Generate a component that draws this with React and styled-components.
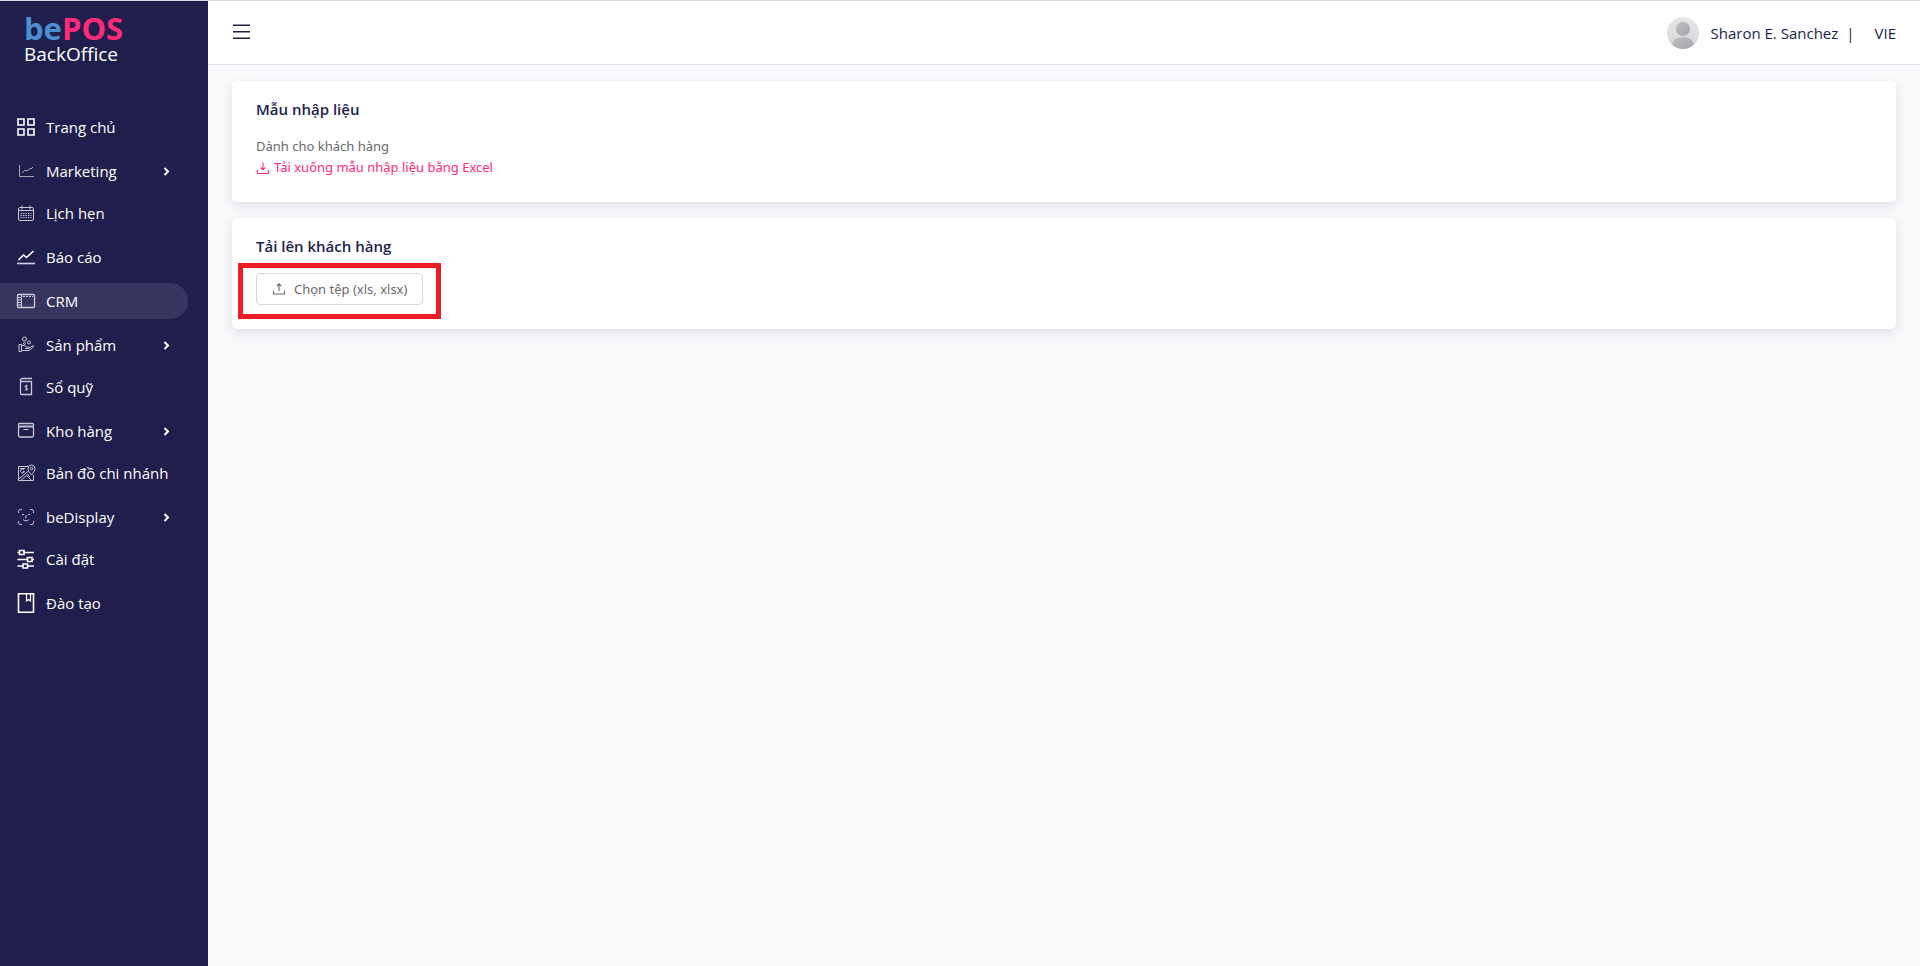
import styled, { createGlobalStyle } from "styled-components";

const Colors = {
  Navy: "#201e4c",
  Pink: "#ff2a78",
  Blue: "#4a8fd3",
  Grey: "#6a6a6a",
  Border: "#d9d9d9",
  Page: "#f8fafc",
  Mark: "#ee1c25",
};

const GlobalStyle = createGlobalStyle`
  * {
    box-sizing: border-box;
  }

  body {
    margin: 0;
    color: ${Colors.Navy};
    background: ${Colors.Page};
    font-family: "Open Sans", "Noto Sans", sans-serif;
    font-size: 15px;
  }

  button {
    font-family: inherit;
    cursor: pointer;
  }
`;

const Layout = styled.div`
  display: flex;
  min-height: 100vh;
  border-top: 1px solid #d8d8de;
`;

const Sidebar = styled.aside`
  flex: 0 0 208px;
  background: ${Colors.Navy};
  color: white;
`;

const Logo = styled.a`
  display: flex;
  flex-direction: column;
  height: 108px;
  padding: 11px 24px;
  color: white;
  text-decoration: none;
`;

const LogoName = styled.span`
  color: ${Colors.Blue};
  font-size: 31px;
  font-weight: bold;
  line-height: 32px;
`;

const LogoAccent = styled.span`
  color: ${Colors.Pink};
`;

const LogoCaption = styled.span`
  font-size: 19px;
  line-height: 20px;
`;

const Menu = styled.ul`
  margin: 0;
  padding: 0;
  list-style: none;
`;

const MenuItem = styled.li`
  margin-bottom: ${({ $group }) => ($group ? 6 : 8)}px;
`;

const MenuLink = styled.a`
  display: flex;
  align-items: center;
  gap: 10px;
  width: 188px;
  height: 36px;
  padding: 0 16px;
  border: none;
  border-radius: 0 18px 18px 0;
  background: ${({ $active }) => ($active ? "#37355f" : "transparent")};
  color: white;
  font-size: 15px;
  font-weight: 500;
  text-align: left;
  text-decoration: none;
`;

const MenuText = styled.span`
  flex: 1;
  white-space: nowrap;
`;

const MenuIcon = styled.svg`
  flex: none;
  width: 20px;
  height: 20px;
  fill: none;
  stroke: currentColor;
  stroke-width: ${({ $bold }) => ($bold ? 1.6 : 1)};
  opacity: ${({ $bold }) => ($bold ? 1 : 0.75)};
`;

const Arrow = styled.svg`
  flex: none;
  width: 12px;
  height: 12px;
  fill: none;
  stroke: currentColor;
  stroke-width: 2;
`;

const Main = styled.div`
  flex: 1;
  min-width: 0;
`;

const Header = styled.header`
  display: flex;
  align-items: center;
  justify-content: space-between;
  height: 64px;
  padding: 0 24px;
  background: white;
  border-bottom: 1px solid #e3e5ea;
`;

const PlainButton = styled.button`
  display: flex;
  align-items: center;
  padding: 0;
  border: none;
  background: none;
  color: inherit;
  font-size: 15px;
`;

const UserBar = styled.div`
  display: flex;
  align-items: center;
`;

const UserName = styled.span`
  margin-left: 12px;
`;

const Divider = styled.span`
  margin: 0 20px 0 8px;
`;

const Content = styled.main`
  display: flex;
  flex-direction: column;
  gap: 16px;
  padding: 16px 24px;
`;

const Card = styled.section`
  padding: 16px 24px 24px;
  border-radius: 5px;
  background: white;
  box-shadow: 0 4px 12px rgba(30, 30, 50, 0.12);
`;

const CardTitle = styled.h2`
  margin: 0 0 14px;
  font-size: 15px;
  font-weight: 600;
  line-height: 25px;
`;

const CardText = styled.p`
  margin: 0;
  color: ${Colors.Grey};
  font-family: "Noto Sans", sans-serif;
  font-size: 13px;
  line-height: 21px;
`;

const DownloadLink = styled.a`
  display: flex;
  align-items: center;
  gap: 4px;
  width: fit-content;
  color: ${Colors.Pink};
  font-family: "Noto Sans", sans-serif;
  font-size: 13px;
  line-height: 21px;
  text-decoration: none;
`;

const FileIcon = styled.svg`
  flex: none;
  width: 14px;
  height: 14px;
  fill: none;
  stroke: currentColor;
  stroke-width: 1.1;
`;

const UploadArea = styled.div`
  position: relative;
  width: fit-content;
`;

const UploadButton = styled.button`
  display: flex;
  align-items: center;
  gap: 8px;
  height: 32px;
  padding: 0 15px;
  border: 1px solid ${Colors.Border};
  border-radius: 4px;
  background: white;
  color: ${Colors.Grey};
  font-family: "Noto Sans", sans-serif;
  font-size: 13px;
`;

const Highlight = styled.div`
  position: absolute;
  inset: -10px -18px -14px;
  border: 5px solid ${Colors.Mark};
  pointer-events: none;
`;

const icons = {
  home: (
    <path d="M2 2h6v6H2zM12 2h6v6h-6zM2 12h6v6H2zM12 12h6v6h-6z" />
  ),
  marketing: (
    <path d="M3.500 4v11.500H18M6 12l3-3 2 1 3-2.500 1 .5 2-2" opacity="0.8" />
  ),
  calendar: (
    <>
      <rect x="2.500" y="4.500" width="15" height="13" rx="1.500" />
      <path d="M2.500 7.500h15M6 2.500v4M14 2.500v4M9 4.500h2" />
      <path
        d="M4.500 10.500h11M4.500 12.500h11M4.500 14.500h11"
        strokeDasharray="1.500 1"
      />
    </>
  ),
  report: (
    <>
      <path d="M2.500 13l5-5 3 2.500 7-6.500" />
      <path d="M1 16.500h18" opacity="0.8" />
    </>
  ),
  crm: (
    <>
      <rect x="1.500" y="3.500" width="17" height="13" rx="1" strokeWidth="1.300" />
      <path d="M5.500 3.500v13M2 6.500h3M2 9h3M2 11.500h3M2 14h3" />
      <path d="M7 5.500h10" strokeDasharray="2 1" />
    </>
  ),
  product: (
    <>
      <circle cx="8.500" cy="4" r="2" />
      <circle cx="13" cy="7.500" r="1.500" />
      <circle cx="8.500" cy="8.500" r="1" />
      <path d="M3 9.500h2.500v7H3zM5.500 10.500h3l2 1.500h2.500v1.500H9M13 13l4-2.500c1 0 1 .8.5 1.300L13 15.500H5.500" />
    </>
  ),
  cash: (
    <>
      <path d="M4.500 5V3c0-.8.5-1.500 1.500-1.500h10M4.500 4.500h11v13h-10c-.7 0-1-.4-1-1z" strokeWidth="1.300" />
      <path d="M11.700 9c-.5-.7-2.800-.7-2.800.6 0 1.400 2.800.8 2.800 2.200 0 1.300-2.300 1.300-2.900.5M10.300 7.700v6" />
    </>
  ),
  stock: (
    <>
      <rect x="2.500" y="2.500" width="15" height="3" rx="1" strokeWidth="1.300" />
      <rect x="2.500" y="5.500" width="15" height="10.500" rx="1.500" strokeWidth="1.300" />
      <path d="M7.500 8.500h5" />
    </>
  ),
  map: (
    <>
      <path d="M12 3.500H2.500v14h15V12M2.500 16l10-8M4.500 17.500l6-5 5 5M11 11l3 3" />
      <path d="M15.500 12c-2-3-3.500-4-3.500-6.500a3.500 3.500 0 0 1 7 0C19 8 17.500 9 15.500 12z" />
      <circle cx="15.500" cy="5.500" r="1.300" />
      <path d="M8 6.500a2 2 0 1 0 .5 2H7M4 5.500h5" />
    </>
  ),
  display: (
    <>
      <path d="M2.500 6V4.500a2 2 0 0 1 2-2H6M14 2.500h1.500a2 2 0 0 1 2 2V6M17.500 14v1.500a2 2 0 0 1-2 2H14M6 17.500H4.500a2 2 0 0 1-2-2V14" />
      <path d="M6 7.500h2M12 7.500h2M10 8v3H9M7 12.500c1.500 1.800 4.500 1.800 6 0" />
    </>
  ),
  settings: (
    <>
      <path d="M1.500 3.500H4M8 3.500h10M1.500 10.500H11M16 10.500h2M1.500 17H7M11.500 17H18" />
      <path d="M3.500 1.500h4.500v4H3.500zM11.500 8.500H16v4h-4.500zM7 15h4.500v4H7z" />
    </>
  ),
  training: (
    <>
      <path d="M2.500.8h15v18.400h-15z" />
      <path d="M10.500 1v7l2-1.500 2 1.500V1" strokeWidth="1.200" />
    </>
  ),
};

const menu = [
  { icon: "home", text: "Trang chủ", bold: true },
  { icon: "marketing", text: "Marketing", group: true },
  { icon: "calendar", text: "Lịch hẹn" },
  { icon: "report", text: "Báo cáo", bold: true },
  { icon: "crm", text: "CRM", active: true },
  { icon: "product", text: "Sản phẩm", group: true },
  { icon: "cash", text: "Sổ quỹ" },
  { icon: "stock", text: "Kho hàng", group: true },
  { icon: "map", text: "Bản đồ chi nhánh" },
  { icon: "display", text: "beDisplay", group: true },
  { icon: "settings", text: "Cài đặt", bold: true },
  { icon: "training", text: "Đào tạo", bold: true },
];

function SidebarItem({ icon, text, bold, group, active }) {
  const target = group ? { as: "button", type: "button" } : { href: "#" };

  return (
    <MenuItem $group={group}>
      <MenuLink {...target} $active={active}>
        <MenuIcon viewBox="0 0 20 20" $bold={bold} aria-hidden="true">
          {icons[icon]}
        </MenuIcon>
        <MenuText>{text}</MenuText>
        {group && (
          <Arrow viewBox="0 0 12 12" aria-hidden="true">
            <path d="M4.500 3L8 6.500 4.500 10" />
          </Arrow>
        )}
      </MenuLink>
    </MenuItem>
  );
}

function Avatar() {
  return (
    <svg width="32" height="32" viewBox="0 0 32 32" aria-hidden="true">
      <defs>
        <linearGradient id="figure" x1="0" y1="0" x2="1" y2="1">
          <stop offset="0" stopColor="#bcbec0" />
          <stop offset="1" stopColor="#a4a6a9" />
        </linearGradient>
        <linearGradient id="back" x1="0" y1="0" x2="0" y2="1">
          <stop offset="0" stopColor="#e6e7e8" />
          <stop offset="1" stopColor="#d3d5d6" />
        </linearGradient>
        <clipPath id="round">
          <circle cx="16" cy="16" r="16" />
        </clipPath>
      </defs>
      <g clipPath="url(#round)">
        <rect width="32" height="32" fill="url(#back)" />
        <path
          d="M4.500 32c0-8 4.500-12 11.500-12s11.500 4 11.500 12z"
          fill="url(#figure)"
        />
        <circle
          cx="16"
          cy="12"
          r="7.500"
          fill="url(#figure)"
          stroke="#dedfe0"
          strokeWidth="1"
        />
      </g>
    </svg>
  );
}

function App() {
  return (
    <>
      <GlobalStyle />
      <Layout>
        <Sidebar>
          <Logo href="#">
            <LogoName>
              be<LogoAccent>POS</LogoAccent>
            </LogoName>
            <LogoCaption>BackOffice</LogoCaption>
          </Logo>
          <nav>
            <Menu>
              {menu.map((item) => (
                <SidebarItem key={item.icon} {...item} />
              ))}
            </Menu>
          </nav>
        </Sidebar>

        <Main>
          <Header>
            <PlainButton type="button" aria-label="Menu">
              <svg width="18" height="18" viewBox="0 0 18 18">
                <path
                  d="M1 1.200h17M1 7.700h17M1 14.200h17"
                  stroke={Colors.Navy}
                  strokeWidth="1.600"
                />
              </svg>
            </PlainButton>
            <UserBar>
              <Avatar />
              <UserName>Sharon E. Sanchez</UserName>
              <Divider>|</Divider>
              <PlainButton type="button">VIE</PlainButton>
            </UserBar>
          </Header>

          <Content>
            <Card>
              <CardTitle>Mẫu nhập liệu</CardTitle>
              <CardText>Dành cho khách hàng</CardText>
              <DownloadLink href="#">
                <FileIcon viewBox="0 0 14 14" aria-hidden="true">
                  <path d="M7 1.500v7M4.800 6.500L7 8.700l2.200-2.200M1.500 9v3.500h11V9" />
                </FileIcon>
                Tải xuống mẫu nhập liệu bằng Excel
              </DownloadLink>
            </Card>

            <Card>
              <CardTitle>Tải lên khách hàng</CardTitle>
              <UploadArea>
                <UploadButton type="button">
                  <FileIcon viewBox="0 0 14 14" aria-hidden="true">
                    <path d="M7 9V2M4.800 4L7 1.800 9.200 4M1.500 8.500V12h11V8.500" />
                  </FileIcon>
                  Chọn tệp (xls, xlsx)
                </UploadButton>
                <Highlight />
              </UploadArea>
            </Card>
          </Content>
        </Main>
      </Layout>
    </>
  );
}

export default App;
